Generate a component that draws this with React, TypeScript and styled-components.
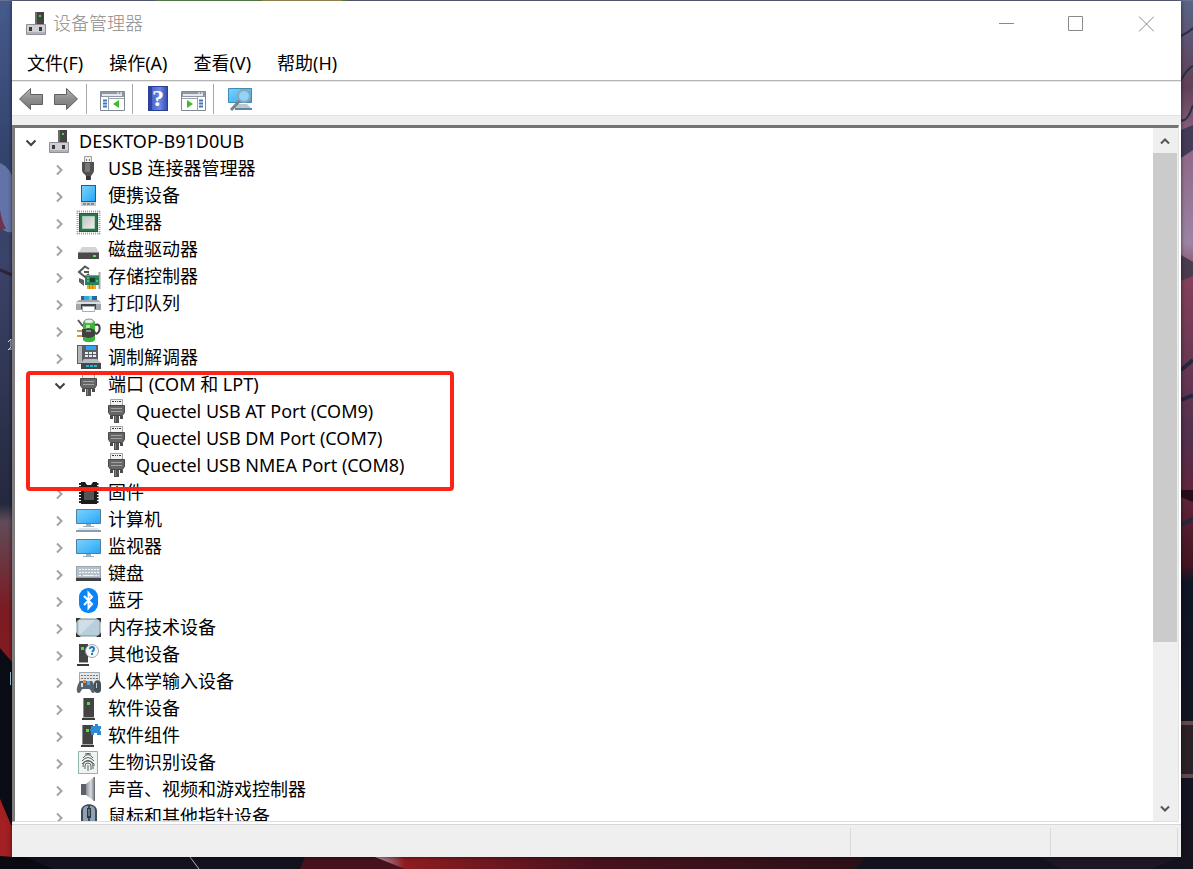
import React, { useState } from "react";
import styled, { createGlobalStyle } from "styled-components";

const GlobalStyle = createGlobalStyle`
  * { box-sizing: border-box; }
  body { margin: 0; background: #12131d; }
  button { font: inherit; color: inherit; border: 0; padding: 0; background: none; }
`;

const Desktop = styled.div`
  position: relative;
  display: flex;
  height: 100vh;
  min-height: 400px;
  padding: 1px 12px 12px;
  overflow: hidden;
  font-family: "Noto Sans", "Noto Sans CJK SC", sans-serif;
  font-size: 18px;
  color: #000;
`;

const WallpaperArt = styled.svg`
  position: absolute;
  inset: 0;
  width: 100%;
  height: 100%;
`;

const Window = styled.main`
  position: relative;
  flex: 1;
  min-width: 0;
  display: flex;
  flex-direction: column;
  background: #fff;
  box-shadow: 0 0 4px rgba(0, 0, 0, 0.6);
`;

const TitleBar = styled.header`
  display: flex;
  align-items: center;
  height: 45px;
  padding-left: 12px;
  gap: 3px;
`;

const Title = styled.h1`
  flex: 1;
  margin: 0;
  font-size: 18px;
  line-height: 27px;
  font-weight: 300;
  color: #8c8c8c;
`;

const CaptionButtons = styled.div`
  display: flex;
`;

const CaptionButton = styled.button`
  display: flex;
  align-items: center;
  justify-content: center;
  width: 70px;
  height: 45px;
`;

const MenuBar = styled.nav`
  display: flex;
  height: 35px;
  padding: 0 2px;
  border-bottom: 1px solid #b5b5b5;
  box-shadow: 0 1px 0 #e6e9ef;
`;

const MenuButton = styled.button`
  padding: 0 13px;
  line-height: 34px;
`;

const ToolBar = styled.div`
  display: flex;
  align-items: center;
  height: 35px;
  padding-top: 2px;
  border-bottom: 1px solid #e2e2e2;
`;

const ToolGroup = styled.div<{ $lead?: number }>`
  display: flex;
  align-items: center;
  gap: 9px;
  height: 30px;
  padding: 0 7px 0 ${(p) => p.$lead ?? 12}px;
  & + & { border-left: 1px solid #a6a6a6; }
`;

const ToolButton = styled.button`
  display: flex;
  width: 26px;
  height: 26px;
`;

const Body = styled.section`
  flex: 1;
  min-height: 0;
  display: flex;
  padding: 9px 2px 2px 0;
  background: linear-gradient(#efefef 9px, #fff 9px);
`;

const ListFrame = styled.div`
  flex: 1;
  min-width: 0;
  display: flex;
  border: solid;
  border-width: 3px 1px 1px 3px;
  border-color: #757373 #e3e3e3 #dedede #7d7b7b;
`;

const TreeView = styled.div`
  flex: 1;
  min-width: 0;
  overflow: hidden;
`;

const TreeList = styled.ul`
  list-style: none;
  margin: 0;
  padding: 0;
`;

const TreeItem = styled.li<{ $marked?: boolean }>`
  position: ${(p) => (p.$marked ? "relative" : "static")};
`;

const indents = [6, 35, 63];

const Row = styled.div<{ $depth: number }>`
  display: flex;
  align-items: center;
  height: 27px;
  line-height: 27px;
  padding-left: ${(p) => indents[p.$depth]}px;
  white-space: nowrap;
`;

const ExpandSlot = styled.span`
  display: flex;
  width: 20px;
  margin-right: 6px;
`;

const ExpandButton = styled.button`
  display: flex;
  align-items: center;
  justify-content: center;
  width: 20px;
  height: 20px;
  margin-top: 3px;
`;

const Label = styled.span`
  margin-left: 6px;
`;

const Highlight = styled.div`
  position: absolute;
  top: 0;
  left: 11px;
  width: 428px;
  height: 120px;
  border: 4px solid #fd2317;
  border-radius: 4px;
  pointer-events: none;
`;

const ScrollBar = styled.div`
  display: flex;
  flex-direction: column;
  width: 25px;
  padding-right: 1px;
  background: #efefef;
`;

const ScrollButton = styled.button`
  display: flex;
  align-items: center;
  justify-content: center;
  height: 25px;
`;

const ScrollTrack = styled.div`
  flex: 1;
`;

const ScrollThumb = styled.div`
  height: 76%;
  background: #cbcbcb;
`;

const StatusBar = styled.footer`
  display: flex;
  height: 33px;
  padding: 3px 3px 1px 0;
  border-top: 1px solid #d7d7d7;
  background: #efefef;
`;

const StatusCell = styled.div<{ $width?: number }>`
  flex: ${(p) => (p.$width ? `0 0 ${p.$width}px` : "1")};
  border-right: 1px solid #d9d9d9;
`;

const Wallpaper = () => (
  <WallpaperArt viewBox="0 0 1193 869" preserveAspectRatio="none" aria-hidden="true">
    <defs>
      <linearGradient id="wl" x1="0" y1="0" x2="0" y2="1">
        <stop offset="0" stopColor="#465a8c" />
        <stop offset=".18" stopColor="#33436d" />
        <stop offset=".3" stopColor="#3b4369" />
        <stop offset=".58" stopColor="#25293e" />
        <stop offset=".6" stopColor="#5f4c59" />
        <stop offset=".7" stopColor="#7b1b22" />
        <stop offset="1" stopColor="#a51c1f" />
      </linearGradient>
      <linearGradient id="wr" x1="0" y1="0" x2="0" y2="1">
        <stop offset="0" stopColor="#5a6487" />
        <stop offset=".1" stopColor="#604057" />
        <stop offset=".16" stopColor="#8d6584" />
        <stop offset=".28" stopColor="#9c84a5" />
        <stop offset=".32" stopColor="#84405a" />
        <stop offset=".5" stopColor="#52304d" />
        <stop offset=".57" stopColor="#61243a" />
        <stop offset=".65" stopColor="#421420" />
        <stop offset=".67" stopColor="#0f1524" />
        <stop offset="1" stopColor="#17131e" />
      </linearGradient>
      <linearGradient id="wb" x1="0" y1="0" x2="1" y2="0">
        <stop offset="0" stopColor="#b3a3b5" />
        <stop offset=".06" stopColor="#8e1c20" />
        <stop offset=".45" stopColor="#47121e" />
        <stop offset="1" stopColor="#2b1017" />
      </linearGradient>
    </defs>
    <rect width="1193" height="869" fill="#12131d" />
    <rect width="14" height="869" fill="url(#wl)" />
    <path d="M0 163q10 4 14 18v50q-6 4-14-4z" fill="#6273a8" />
    <path d="M0 210q2 12 6 19H0z" fill="#6b3550" />
    <path d="M0 270l12 5" stroke="#30233d" strokeWidth="3" />
    <path d="M0 648l12 14v165q-8-15-12-28z" fill="#0a0d15" />
    <path d="M0 799l12 28v30l40 12H26L0 856z" fill="#a21f22" />
    <path d="M0 856l28 2 25 11H0z" fill="#090a12" />
    <path d="M8 342l3-3v8l-3 3M9 349h3" stroke="#dbe8ef" fill="none" />
    <path d="M10 672h1v13h-1z" fill="#a9d5ee" />
    <rect x="1180" width="13" height="869" fill="url(#wr)" />
    <path d="M1181 36q8-4 12-8M1181 80q7-12 12-14M1181 120q6 3 12-15" stroke="#2e2c47" strokeWidth="2" fill="none" />
    <path d="M1181 130l12-5v25l-12 8z" fill="#433b57" />
    <path d="M1181 255l12 7v14l-12 5z" fill="#4b3b4f" />
    <path d="M1181 370l12-10M1181 400l12-5M1181 525l12-6" stroke="#252640" strokeWidth="4" />
    <path d="M1181 490h12v12l-12-5z" fill="#260e18" />
    <path d="M1181 722h12v55h-12z" fill="#2b2126" />
    <path d="M1181 723h12M1181 776h12" stroke="#644850" strokeWidth="4" />
    <rect x="0" width="1193" height="1" fill="#6a7190" />
    <rect x="155" width="192" height="1" fill="#6b9a59" />
    <rect x="262" width="80" height="1" fill="#bda562" />
    <path d="M190 857l9 12" stroke="#b0b0bf" />
    <path d="M305 857h560l-12 12H300z" fill="#47121e" />
    <path d="M375 857h490l-10 12H405z" fill="url(#wb)" />
    <path d="M1040 857h141l-30 12h-90z" fill="#1d1725" />
  </WallpaperArt>
);

const Art = ({ children, w = 26, h = 27 }: { children: React.ReactNode; w?: number; h?: number }) => (
  <svg width={w} height={h} viewBox={`0 0 ${w} ${h}`} fill="none" aria-hidden="true">
    {children}
  </svg>
);

const PaintDefs = styled.svg`
  position: absolute;
`;

const Gradients = () => (
  <PaintDefs width="0" height="0" aria-hidden="true">
    <defs>
      <linearGradient id="blue" x1="0" y1="0" x2="1" y2="1">
        <stop offset="0" stopColor="#7fd0fb" />
        <stop offset=".55" stopColor="#4dbcfa" />
        <stop offset="1" stopColor="#27a3f5" />
      </linearGradient>
      <linearGradient id="gray" x1="0" y1="0" x2="0" y2="1">
        <stop offset="0" stopColor="#b4b4b4" />
        <stop offset=".5" stopColor="#8d8d8d" />
        <stop offset="1" stopColor="#777" />
      </linearGradient>
      <linearGradient id="silver" x1="0" y1="0" x2="1" y2="1">
        <stop offset="0" stopColor="#c2c2c2" />
        <stop offset="1" stopColor="#efefef" />
      </linearGradient>
      <linearGradient id="metal" x1="0" y1="0" x2="1" y2="0">
        <stop offset="0" stopColor="#8d9297" />
        <stop offset=".6" stopColor="#d9dcdf" />
        <stop offset="1" stopColor="#858a90" />
      </linearGradient>
    </defs>
  </PaintDefs>
);

const HostArt = () => (
  <Art>
    <path d="M11 2h9v12h-9z" fill="#434343" />
    <path d="M11 2h2v12h-2z" fill="#6c6c6c" />
    <path d="M15 5h2v2h-2z" fill="#35e22f" />
    <path d="M2.500 14.500h19v10h-19z" fill="#cfcfd4" stroke="#8f8f96" />
    <path d="M3 22h18v2H3z" fill="#b2b2ba" />
    <path d="M5 17h3v4H5zM15 17h3v4h-3z" fill="#3a3a3a" />
  </Art>
);

const UsbArt = () => (
  <Art>
    <path d="M8.500 1.500h7v6h-7z" fill="#ececec" stroke="#9c9c9c" />
    <path d="M10 4h1v2h-1zM13 4h1v2h-1z" fill="#777" />
    <path d="M6 7h12v8c0 3-2 4-3 6v4H10v-4c-1-2-4-3-4-6z" fill="#505050" />
    <path d="M9 8h5v9h-5z" fill="#777" />
    <path d="M10 21h4v4h-4z" fill="#333" />
  </Art>
);

const PortableArt = () => (
  <Art>
    <path d="M5 3h15v21H5z" fill="#3f5566" />
    <path d="M6 4h13v15H6z" fill="url(#blue)" />
    <path d="M5 20h15v4H5z" fill="#c7cacd" />
    <path d="M7 21h3v2H7zM11 21h3v2h-3zM15 21h3v2h-3z" fill="#858b91" />
  </Art>
);

const CpuArt = () => (
  <Art>
    <path d="M1.500 2v23M23.500 2v23" stroke="#c9a041" strokeWidth="2" strokeDasharray="1 1" />
    <path d="M1 2.500h23M1 24.500h23" stroke="#c9a041" strokeWidth="2" strokeDasharray="1 1" />
    <path d="M3 4h19v19H3z" fill="#2f7350" />
    <path d="M3.500 4.500h18v18h-18z" stroke="#235a3d" />
    <path d="M6.500 7.500h12v12h-12z" fill="url(#silver)" stroke="#a8cbb6" />
  </Art>
);

const DiskArt = () => (
  <Art>
    <path d="M6 11h14l3 6H2z" fill="#d5d5d8" />
    <path d="M2 16h21v7H2z" fill="#4a4a4a" />
    <path d="M2 16h21v1H2z" fill="#8e8e8e" />
    <path d="M17 19h3v2h-3z" fill="#47f03e" />
  </Art>
);

const StorageArt = () => (
  <Art>
    <path d="M13 6L9 3.500 3 9l6 5 4-3M8 9h5" stroke="#555" strokeWidth="2" />
    <path d="M3 15v4l5 4V17z" fill="#5c5c5c" />
    <path d="M23.500 9v17" stroke="#a6a6a6" strokeWidth="2" />
    <path d="M9 12h14v10H9z" fill="#268355" />
    <path d="M9 12h14v1H9z" fill="#5db486" />
    <path d="M14 15h5v4h-5z" fill="#1b3e2e" />
    <path d="M11 15h2M11 18h2M20 18h2" stroke="#9ae0b8" />
    <path d="M11 22h9v4h-9z" fill="#f2a71e" />
    <path d="M13.500 22v4M16.500 22v4" stroke="#c97b07" />
  </Art>
);

const PrinterArt = () => (
  <Art>
    <path d="M5 6h16v6H5z" fill="#38627c" />
    <path d="M8 6h5v4H8z" fill="#35a6ee" />
    <path d="M13 6h4v4h-4z" fill="#6fdc8b" />
    <path d="M16 6h3v4h-3z" fill="#1c6cc0" />
    <path d="M3 10h19l3 2v8H0v-8z" fill="#a3a7ac" />
    <path d="M0 12h25v2H0z" fill="#dcdfe2" />
    <path d="M5 14h15v5H5z" fill="#3f444a" />
    <path d="M6.500 16.500h12v5h-12z" fill="#fff" stroke="#a9acb1" />
  </Art>
);

const BatteryArt = () => (
  <Art>
    <path d="M2 3l4 5 5 4" stroke="#555" strokeWidth="2" />
    <path d="M7 6c0-5 12-5 12 0v17c-2 3-10 3-12 0z" fill="#3cb43d" />
    <path d="M8 5c1-4 9-4 10 0-2 2-8 2-10 0z" fill="#e3f0e1" stroke="#889688" />
    <path d="M10 8h4v6h-4z" fill="#a4eb97" />
    <path d="M19 8c6-3 6 7 1 9" stroke="#3a3a3a" strokeWidth="2" />
    <path d="M1 14h6M1 19h6" stroke="#cf9d35" strokeWidth="2" />
    <path d="M6 12h3l3-1c5 0 8 3 8 5s-3 5-8 5l-3-1H6z" fill="#414141" />
    <path d="M10 13h5v2h-5z" fill="#8e8e8e" />
  </Art>
);

const ModemArt = () => (
  <Art>
    <path d="M1 1h21v19H1z" fill="#5b5f63" />
    <path d="M2 2h4v17H2z" fill="#b5b8bb" />
    <path d="M10 2h10v4H10z" fill="#2fa4f0" />
    <path d="M9 8h3v2H9zM13 8h3v2h-3zM17 8h3v2h-3zM9 11h3v2H9zM13 11h3v2h-3zM17 11h3v2h-3z" fill="#e8ecef" />
    <path d="M8 15h13l4 4v6H5v-6z" fill="#b9bcc0" />
    <path d="M5 19h20v6H5z" fill="#474747" />
    <path d="M10 21h3v2h-3zM14 21h3v2h-3zM18 21h3v2h-3z" fill="#1fb9d3" />
  </Art>
);

const PortArt = () => (
  <Art>
    <path d="M6.500 1.500h12v6h-12z" fill="#f1f1f1" stroke="#a5a5a5" />
    <path d="M8 3h2v1H8zM11 3h1v1h-1zM13 3h1v1h-1zM15 3h2v1h-2z" fill="#333" />
    <path d="M4.500 7.500h16v7l-2 3h-12l-2-3z" fill="#666" stroke="#484848" />
    <path d="M7 10.500h11M7 13.500h11" stroke="#a2a2a2" />
    <path d="M6 18h3v3H6zM16 18h3v3h-3z" fill="#4b4b4b" />
    <path d="M10 18h5v7h-5z" fill="#525252" />
    <path d="M11 18h1v6h-1z" fill="#818181" />
  </Art>
);

const FirmwareArt = () => (
  <Art>
    <path d="M5 3h4l2 3h4l2-3h4v22H5z" fill="#1c1c1c" />
    <path d="M8 8h10v13H8z" fill="#555" />
    <path d="M4 4v21M21.500 4v21" stroke="#222" strokeWidth="2" strokeDasharray="2 1" />
  </Art>
);

const Screen = ({ y }: { y: number }) => (
  <>
    <path d={`M.5 ${y}.5h24v14H.5z`} fill="url(#blue)" stroke="#4d7f9f" />
    <path d={`M10 ${y + 15}h5v2h3v1H7v-1h3z`} fill="#9fb0be" />
  </>
);

const ComputerArt = () => (
  <Art>
    <Screen y={3} />
    <path d="M3 22h19l3 4H0z" fill="#dfe6ec" />
    <path d="M0 25h25" stroke="#8b9dac" strokeWidth="2" />
  </Art>
);

const MonitorArt = () => (
  <Art>
    <Screen y={6} />
  </Art>
);

const KeyboardArt = () => (
  <Art>
    <path d="M0 6h25v15H0z" fill="#9ba5ad" />
    <path d="M1 7h23v10H1z" fill="#b9c1c8" />
    <path d="M3 9.500h20M3 12.500h20M3 15.500h3M19 15.500h4" stroke="#f4f7f9" strokeDasharray="2 1" />
    <path d="M7 15.500h11" stroke="#f4f7f9" />
    <path d="M0 18h25v3H0z" fill="#3c4247" />
  </Art>
);

const BluetoothArt = () => (
  <Art>
    <rect x="3" y="1" width="19" height="25" rx="9" fill="#0a84f5" />
    <path d="M8 9l8 8-3.500 4V6L16 10l-8 8" stroke="#fff" strokeWidth="2" />
  </Art>
);

const MemoryArt = () => (
  <Art>
    <rect x="1" y="5" width="23" height="17" rx="2" fill="#b9cedb" stroke="#7e8f9b" />
    <path d="M3 6h16L5 20H3z" fill="#cfdee7" />
    <path d="M0 9V4h5L1 7zM25 9V4h-5l4 3zM0 18v5h5l-4-3zM25 18v5h-5l4-3z" fill="#333" />
  </Art>
);

const OtherArt = () => (
  <Art>
    <path d="M3 3h9v18H3z" fill="#434343" />
    <path d="M5 6h3v3H5z" fill="#42e83c" />
    <path d="M1 23h12v2H1z" fill="#3a3a3a" />
    <path d="M3 21h9v1H3z" fill="#aaa" />
    <circle cx="16" cy="10" r="6.500" fill="#f7fafc" stroke="#a0a6ab" />
    <path d="M14 8q0-2 2-2t2 2q0 1-2 3M16 12v2" stroke="#2478bd" strokeWidth="2" />
  </Art>
);

const HidArt = () => (
  <Art>
    <path d="M3.500 4.500h20v12h-20z" fill="#e4e6e8" stroke="#a1a7ac" />
    <path d="M5 7.500h17M5 10.500h17" stroke="#777" strokeDasharray="2 1" />
    <path d="M4 13h12c3 4 4 12 1 12-2 0-2-4-4-4H7c-2 0-2 4-4 4-4 0-2-8 1-12z" fill="#56636e" />
    <path d="M5 15h2v4H5z" fill="#d6e4ee" />
    <path d="M7 12h3v3H7z" fill="#ee8b2c" />
    <path d="M11 13h3v4h-3z" fill="#44a8ec" />
    <path d="M18 16c0-5 7-5 7 0v6c0 4-7 4-7 0z" fill="#454f57" />
    <path d="M20.500 15v5" stroke="#c4ccd2" />
  </Art>
);

const TowerShape = ({ x }: { x: number }) => (
  <>
    <path d={`M${x} 3h11v19H${x}z`} fill="#434343" />
    <path d={`M${x} 3h1v19h-1z`} fill="#8c8c8c" />
    <path d={`M${x + 4} 7h3v3h-3z`} fill="#42e83c" />
    <path d={`M${x} 22h11v1H${x}z`} fill="#aaa" />
    <path d={`M${x - 1} 23h13v2H${x - 1}z`} fill="#3a3a3a" />
  </>
);

const SoftwareDeviceArt = () => (
  <Art>
    <TowerShape x={7} />
  </Art>
);

const ComponentArt = () => (
  <Art>
    <TowerShape x={6} />
    <path d="M15 4h4V2h3v2h3v3h-1v2h1v4h-4v-2h-3v2h-3V9h-1V7h1z" fill="#2f8ad6" />
  </Art>
);

const FingerprintArt = () => (
  <Art>
    <path d="M2.500 2.500h19v22h-19z" fill="#eef5f2" stroke="#8fb5a9" />
    <path
      d="M7 9q5-7 10 0M6 12q6-7 12 0M6 15q6-7 12 0v2M7 18q0-6 5-6t5 6v2M9 20v-3q0-3 3-3t3 3v4M12 16v6M9 5q3-1 6 0"
      stroke="#555d5a"
    />
  </Art>
);

const SpeakerArt = () => (
  <Art>
    <path d="M5 8h5v11H5z" fill="#59616a" />
    <path d="M10 8l8-7v24l-8-6z" fill="url(#metal)" />
    <path d="M18 1h1v24h-1z" fill="#6a6f75" />
  </Art>
);

const MouseArt = () => (
  <Art>
    <path d="M5 8c0-9 16-9 16 0v19H5z" fill="#3f4a56" />
    <path d="M7 8c0-6 5-5 5-5v24H7zM19 8c0-6-5-5-5-5v24h5z" fill="#8fa2b5" />
    <path d="M11 5h4v10h-4z" fill="#2e3640" />
    <path d="M13 6v7" stroke="#9db1c4" />
  </Art>
);

const ArrowArt = ({ flip }: { flip?: boolean }) => (
  <Art h={26}>
    <path
      transform={flip ? "matrix(-1 0 0 1 26 0)" : undefined}
      d="M1.500 13L12.500 2.500V8.500H24.500V18.500H12.500V23.500z"
      fill="url(#gray)"
      stroke="#5f5f5f"
      strokeLinejoin="round"
    />
  </Art>
);

const PaneArt = ({ flip }: { flip?: boolean }) => (
  <Art h={26}>
    <path d="M1.500 5.500h24v19h-24z" fill="#fff" stroke="#808892" />
    <path d="M2 6h23v5H2z" fill="#8e98a3" />
    <path d="M3 9h20" stroke="#e5e9ed" strokeWidth="2" />
    <path d="M18 7h2M21 7h2" stroke="#fff" />
    <g transform={flip ? "matrix(-1 0 0 1 27 0)" : undefined}>
      <path d="M9.500 11v13M10 12.500h15" stroke="#9aa2ab" />
      <path d="M4 14.500h4M4 17.500h4M4 20.500h4" stroke="#3b78b5" strokeWidth="2" />
      <path d="M20 14v8l-6-4z" fill="#3fba2c" />
    </g>
  </Art>
);

const HelpGlyph = styled.span`
  display: flex;
  align-items: center;
  justify-content: center;
  width: 20px;
  height: 25px;
  margin-left: 3px;
  background: linear-gradient(90deg, #2e44a0 3px, #4a66cf 3px, #6d88e4 60%, #3550b4);
  border: 1px solid #2a3f96;
  color: #fff;
  font: bold 24px/23px "Liberation Serif", serif;
`;

const ScanArt = () => (
  <Art h={26}>
    <path d="M2.500 2.500h23v14h-23z" fill="url(#blue)" stroke="#3f8bb8" />
    <path d="M11 18h10l5 5H8z" fill="#b9c7d2" />
    <path d="M9 23h17" stroke="#5c88a8" strokeWidth="2" />
    <circle cx="18" cy="10" r="6" fill="#8fd4fa" stroke="#92a4b0" strokeWidth="2" />
    <path d="M13.500 15L5 24" stroke="#78848c" strokeWidth="3" />
  </Art>
);

const Chevron = ({ open }: { open: boolean }) => (
  <svg width="12" height="12" viewBox="0 0 12 12" fill="none" aria-hidden="true">
    {open ? (
      <path d="M1.500 3.500L6 8l4.500-4.500" stroke="#404040" strokeWidth="2" />
    ) : (
      <path d="M3 1.500L7.500 6 3 10.500" stroke="#a3a3a3" strokeWidth="2" />
    )}
  </svg>
);

type Node = { label: string; Icon: () => React.ReactElement; marked?: boolean; children?: Node[] };

const tree: Node = {
  label: "DESKTOP-B91D0UB",
  Icon: HostArt,
  children: [
    { label: "USB 连接器管理器", Icon: UsbArt },
    { label: "便携设备", Icon: PortableArt },
    { label: "处理器", Icon: CpuArt },
    { label: "磁盘驱动器", Icon: DiskArt },
    { label: "存储控制器", Icon: StorageArt },
    { label: "打印队列", Icon: PrinterArt },
    { label: "电池", Icon: BatteryArt },
    { label: "调制解调器", Icon: ModemArt },
    {
      label: "端口 (COM 和 LPT)",
      Icon: PortArt,
      marked: true,
      children: [
        { label: "Quectel USB AT Port (COM9)", Icon: PortArt },
        { label: "Quectel USB DM Port (COM7)", Icon: PortArt },
        { label: "Quectel USB NMEA Port (COM8)", Icon: PortArt },
      ],
    },
    { label: "固件", Icon: FirmwareArt },
    { label: "计算机", Icon: ComputerArt },
    { label: "监视器", Icon: MonitorArt },
    { label: "键盘", Icon: KeyboardArt },
    { label: "蓝牙", Icon: BluetoothArt },
    { label: "内存技术设备", Icon: MemoryArt },
    { label: "其他设备", Icon: OtherArt },
    { label: "人体学输入设备", Icon: HidArt },
    { label: "软件设备", Icon: SoftwareDeviceArt },
    { label: "软件组件", Icon: ComponentArt },
    { label: "生物识别设备", Icon: FingerprintArt },
    { label: "声音、视频和游戏控制器", Icon: SpeakerArt },
    { label: "鼠标和其他指针设备", Icon: MouseArt },
  ],
};

const TreeNode = ({ node, depth }: { node: Node; depth: number }) => {
  const [open, setOpen] = useState(Boolean(node.children));
  const { Icon } = node;
  return (
    <TreeItem $marked={node.marked}>
      <Row $depth={depth}>
        <ExpandSlot>
          {depth < 2 && (
            <ExpandButton type="button" aria-label={node.label} aria-expanded={open} onClick={() => setOpen(!open)}>
              <Chevron open={open} />
            </ExpandButton>
          )}
        </ExpandSlot>
        <Icon />
        <Label>{node.label}</Label>
      </Row>
      {open && node.children && (
        <TreeList>
          {node.children.map((child) => (
            <TreeNode key={child.label} node={child} depth={depth + 1} />
          ))}
        </TreeList>
      )}
      {node.marked && <Highlight />}
    </TreeItem>
  );
};

export default function App() {
  return (
    <Desktop>
      <GlobalStyle />
      <Wallpaper />
      <Gradients />
      <Window>
        <TitleBar>
          <HostArt />
          <Title>设备管理器</Title>
          <CaptionButtons>
            <CaptionButton type="button" aria-label="最小化">
              <svg width="16" height="16" fill="none" stroke="#8a8a8a"><path d="M1 7.500h15" /></svg>
            </CaptionButton>
            <CaptionButton type="button" aria-label="最大化">
              <svg width="16" height="16" fill="none" stroke="#8a8a8a"><path d="M.5 .5h14v14H.5z" /></svg>
            </CaptionButton>
            <CaptionButton type="button" aria-label="关闭">
              <svg width="16" height="16" fill="none" stroke="#8a8a8a"><path d="M1 .5l15 15M16 .5l-15 15" /></svg>
            </CaptionButton>
          </CaptionButtons>
        </TitleBar>
        <MenuBar>
          {["文件(F)", "操作(A)", "查看(V)", "帮助(H)"].map((item) => (
            <MenuButton key={item} type="button">{item}</MenuButton>
          ))}
        </MenuBar>
        <ToolBar>
          <ToolGroup $lead={6}>
            <ToolButton type="button" aria-label="后退"><ArrowArt /></ToolButton>
            <ToolButton type="button" aria-label="前进"><ArrowArt flip /></ToolButton>
          </ToolGroup>
          <ToolGroup>
            <ToolButton type="button" aria-label="显示/隐藏控制台树"><PaneArt /></ToolButton>
          </ToolGroup>
          <ToolGroup>
            <ToolButton type="button" aria-label="帮助"><HelpGlyph>?</HelpGlyph></ToolButton>
            <ToolButton type="button" aria-label="显示/隐藏操作窗格"><PaneArt flip /></ToolButton>
          </ToolGroup>
          <ToolGroup>
            <ToolButton type="button" aria-label="扫描检测硬件改动"><ScanArt /></ToolButton>
          </ToolGroup>
        </ToolBar>
        <Body>
          <ListFrame>
            <TreeView>
              <TreeList>
                <TreeNode node={tree} depth={0} />
              </TreeList>
            </TreeView>
            <ScrollBar>
              <ScrollButton type="button" aria-label="向上滚动">
                <svg width="12" height="12" fill="none" stroke="#555" strokeWidth="2"><path d="M2 8.500L6 4.500l4 4" /></svg>
              </ScrollButton>
              <ScrollTrack><ScrollThumb /></ScrollTrack>
              <ScrollButton type="button" aria-label="向下滚动">
                <svg width="12" height="12" fill="none" stroke="#555" strokeWidth="2"><path d="M2 3.500L6 7.500l4-4" /></svg>
              </ScrollButton>
            </ScrollBar>
          </ListFrame>
        </Body>
        <StatusBar>
          <StatusCell />
          <StatusCell $width={200} />
          <StatusCell $width={127} />
        </StatusBar>
      </Window>
    </Desktop>
  );
}
